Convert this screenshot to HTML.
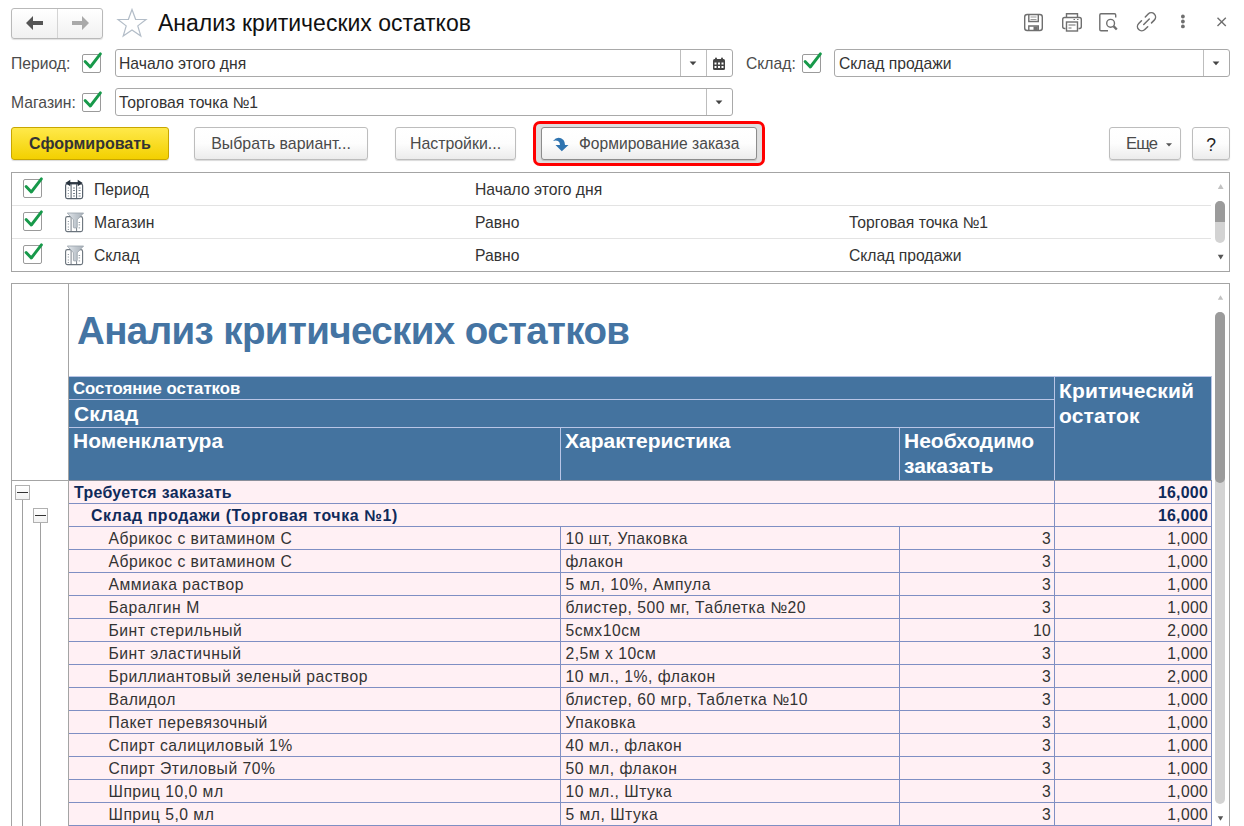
<!DOCTYPE html>
<html><head><meta charset="utf-8">
<style>
*{box-sizing:border-box;margin:0;padding:0}
html,body{width:1244px;height:826px;overflow:hidden;background:#fff;font-family:"Liberation Sans",sans-serif;position:relative}
.a{position:absolute}
.t{position:absolute;white-space:nowrap;line-height:1}
.nav{left:11px;top:8px;width:92px;height:31px;border:1px solid #b9b9b9;border-radius:3px;background:linear-gradient(#fff,#f1f1f1);box-shadow:0 1px 1px rgba(0,0,0,.12)}
.field{position:absolute;border:1px solid #a9a9a9;border-radius:3px;background:#fff;height:28px}
.cb{position:absolute;width:19px;height:19px;border:1px solid #9a9a9a;border-radius:2px;background:#fff}
.lbl{font-size:15.7px;color:#4b4b4b}
.ftx{font-size:15.7px;color:#333}
.btn{position:absolute;height:33px;border:1px solid #bdbdbd;border-radius:3px;background:linear-gradient(#fff 0%,#fdfdfd 50%,#ececec 100%);box-shadow:0 1px 1px rgba(0,0,0,.15);font-size:15.9px;color:#4a4a4a;text-align:center;line-height:31px;white-space:nowrap}
.vl{position:absolute;width:1px}
.hl{position:absolute;height:1px}
.st{position:absolute;white-space:nowrap;line-height:1;font-size:15.7px;color:#333}
.rt{position:absolute;white-space:nowrap;line-height:1;font-size:15.7px;color:#333}
.hd{position:absolute;white-space:nowrap;font-weight:bold;color:#fff;font-size:21px;line-height:24.5px}
</style></head><body>

<div class="a nav"></div>
<div class="a" style="left:57px;top:9px;width:1px;height:29px;background:#d4d4d4"></div>
<svg class="a" style="left:26px;top:16px" width="18" height="14" viewBox="0 0 18 14"><path d="M0 7 L7 0 L7 5 L17 5 L17 9 L7 9 L7 14 Z" fill="#555"/></svg>
<svg class="a" style="left:71px;top:16px" width="18" height="14" viewBox="0 0 18 14"><path d="M18 7 L11 0 L11 5 L1 5 L1 9 L11 9 L11 14 Z" fill="#a9a9a9"/></svg>
<svg class="a" style="left:116px;top:8px" width="32" height="30" viewBox="0 0 32 30"><path d="M16 1.5 L19.6 11.3 L30 11.5 L21.8 17.9 L24.8 28 L16 22 L7.2 28 L10.2 17.9 L2 11.5 L12.4 11.3 Z" fill="none" stroke="#b3bdc8" stroke-width="1.2"/></svg>
<div class="t" style="left:158px;top:12px;font-size:23px;color:#111">Анализ критических остатков</div>
<svg class="a" style="left:1020px;top:10px" width="220" height="26" viewBox="1020 10 220 26">
<g fill="none" stroke="#6f6f6f" stroke-width="1.4">
<rect x="1024.7" y="14.5" width="17.6" height="16" rx="2.5"/>
<path d="M1028.8 14.5 V21.5 H1038.3 V14.5"/>
<path d="M1030.5 17 H1036.5 M1030.5 19.5 H1036.5" stroke="#999" stroke-width="1"/>
<path d="M1028.8 30.5 V26 H1038.3 V30.5"/>
</g>
<rect x="1033.5" y="26.5" width="4.3" height="4" fill="#6f6f6f"/>
<g fill="none" stroke="#6f6f6f" stroke-width="1.4">
<path d="M1066.5 17.5 V13.8 H1077.5 V17.5"/>
<path d="M1065.5 28.5 H1064.5 Q1062.7 28.5 1062.7 26.5 V19.5 Q1062.7 17.5 1064.5 17.5 H1079.5 Q1081.3 17.5 1081.3 19.5 V26.5 Q1081.3 28.5 1079.5 28.5 H1078.5"/>
<rect x="1066.5" y="22" width="11" height="9"/>
<path d="M1068.5 25 H1075.5 M1068.5 28 H1071.5" stroke-width="1"/>
<path d="M1073.5 19.5 H1075 M1077 19.5 H1078.5" stroke-width="1"/>
</g>
<g fill="none" stroke="#6f6f6f" stroke-width="1.4">
<path d="M1108 30.8 H1101 Q1099.8 30.8 1099.8 29.5 V15 Q1099.8 13.8 1101 13.8 H1114.5 Q1115.7 13.8 1115.7 15 V17.5"/>
<circle cx="1110.6" cy="23.3" r="3.9"/>
<path d="M1113.5 26.2 L1116.8 29.5" stroke-width="2.4"/>
</g>
<g fill="none" stroke="#6f6f6f" stroke-width="1.5" stroke-linecap="round" transform="translate(1146.5 21.8) rotate(-45)"><path d="M-2.8 -4.3 H-6.7 A4.3 4.3 0 0 0 -6.7 4.3 H-2.6"/><path d="M2.8 4.3 H6.7 A4.3 4.3 0 0 0 6.7 -4.3 H2.6"/><path d="M-3.9 0 H3.9"/></g>
<circle cx="1182.9" cy="16.5" r="1.9" fill="#6f6f6f"/>
<circle cx="1182.9" cy="21.5" r="1.9" fill="#6f6f6f"/>
<circle cx="1182.9" cy="26.4" r="1.9" fill="#6f6f6f"/>
<path d="M1217.5 17.8 L1225.8 26 M1225.8 17.8 L1217.5 26" stroke="#6f6f6f" stroke-width="1.4"/>
</svg>
<div class="t lbl" style="left:11px;top:56px">Период:</div>
<div class="cb" style="left:82px;top:54px"></div><svg class="a" style="left:81px;top:51px" width="24" height="24" viewBox="0 0 24 24"><path d="M4.1 10.5 L9.3 16 L19.4 2.8" fill="none" stroke="#17994a" stroke-width="2.9" stroke-linecap="round" stroke-linejoin="round"/></svg>
<div class="field" style="left:115px;top:49px;width:618px"></div>
<div class="a" style="left:680px;top:50px;width:1px;height:26px;background:#bdbdbd"></div>
<div class="a" style="left:706px;top:50px;width:1px;height:26px;background:#bdbdbd"></div>
<svg class="a" style="left:689px;top:61px" width="8" height="5" viewBox="0 0 8 5"><path d="M0.6 0.4 H7.4 L4 4.2 Z" fill="#444"/></svg>
<svg class="a" style="left:712px;top:57px" width="14" height="14" viewBox="0 0 14 14"><g fill="#444"><rect x="1" y="2" width="12" height="11" rx="1.5"/></g><g fill="#fff"><rect x="2.5" y="5.5" width="2" height="2"/><rect x="6" y="5.5" width="2" height="2"/><rect x="9.5" y="5.5" width="2" height="2"/><rect x="2.5" y="9" width="2" height="2"/><rect x="6" y="9" width="2" height="2"/><rect x="9.5" y="9" width="2" height="2"/></g><g fill="#444"><rect x="3" y="0.5" width="2" height="3" rx="1"/><rect x="9" y="0.5" width="2" height="3" rx="1"/></g></svg>
<div class="t ftx" style="left:119px;top:56px">Начало этого дня</div>
<div class="t lbl" style="left:746px;top:56px">Склад:</div>
<div class="cb" style="left:802px;top:54px"></div><svg class="a" style="left:801px;top:51px" width="24" height="24" viewBox="0 0 24 24"><path d="M4.1 10.5 L9.3 16 L19.4 2.8" fill="none" stroke="#17994a" stroke-width="2.9" stroke-linecap="round" stroke-linejoin="round"/></svg>
<div class="field" style="left:834px;top:49px;width:396px"></div>
<div class="a" style="left:1203px;top:50px;width:1px;height:26px;background:#bdbdbd"></div>
<svg class="a" style="left:1212px;top:61px" width="8" height="5" viewBox="0 0 8 5"><path d="M0.6 0.4 H7.4 L4 4.2 Z" fill="#444"/></svg>
<div class="t ftx" style="left:839px;top:56px">Склад продажи</div>
<div class="t lbl" style="left:11px;top:95px">Магазин:</div>
<div class="cb" style="left:82px;top:93px"></div><svg class="a" style="left:81px;top:90px" width="24" height="24" viewBox="0 0 24 24"><path d="M4.1 10.5 L9.3 16 L19.4 2.8" fill="none" stroke="#17994a" stroke-width="2.9" stroke-linecap="round" stroke-linejoin="round"/></svg>
<div class="field" style="left:115px;top:88px;width:618px"></div>
<div class="a" style="left:706px;top:89px;width:1px;height:26px;background:#bdbdbd"></div>
<svg class="a" style="left:715px;top:100px" width="8" height="5" viewBox="0 0 8 5"><path d="M0.6 0.4 H7.4 L4 4.2 Z" fill="#444"/></svg>
<div class="t ftx" style="left:119px;top:95px">Торговая точка №1</div>
<div class="btn" style="left:11px;top:127px;width:158px;border-color:#c8a600;background:linear-gradient(#ffe94a,#f3d000);font-weight:bold;color:#333;font-size:16px">Сформировать</div>
<div class="btn" style="left:194px;top:127px;width:174px">Выбрать вариант...</div>
<div class="btn" style="left:395px;top:127px;width:121px">Настройки...</div>
<div class="a" style="left:533px;top:121px;width:232px;height:45px;border:3px solid #ff0000;border-radius:7px;background:#dfdfdf"></div>
<div class="btn" style="left:541px;top:127px;width:216px;text-align:left;padding-left:37px;border-color:#8c8c8c;font-size:15.6px">Формирование заказа</div>
<svg class="a" style="left:552px;top:136px" width="18" height="16" viewBox="0 0 18 16"><path d="M1 5 Q6 -1 11.5 4 Q13 6 13 9 L16.5 9 L9.8 15.2 L3.5 9 L8 9 Q8 6 6 5 Q4 4 1 5 Z" fill="#2f74b0"/></svg>
<div class="btn" style="left:1109px;top:127px;width:72px;text-align:left;padding-left:16px;font-size:16.6px;letter-spacing:-0.9px">Еще</div>
<svg class="a" style="left:1166px;top:143px" width="6" height="4" viewBox="0 0 6 4"><path d="M0 0.3 H6 L3 3.5 Z" fill="#555"/></svg>
<div class="btn" style="left:1192px;top:127px;width:38px;color:#222;font-size:17.5px;line-height:34.5px">?</div>
<div class="a" style="left:11px;top:172px;width:1219px;height:100px;border:1px solid #a4a4a4"></div>
<div class="hl" style="left:12px;top:205px;width:1199px;background:#e3e3e3"></div>
<div class="hl" style="left:12px;top:238px;width:1199px;background:#e3e3e3"></div>
<div class="cb" style="left:23px;top:179px"></div><svg class="a" style="left:22px;top:176px" width="24" height="24" viewBox="0 0 24 24"><path d="M4.1 10.5 L9.3 16 L19.4 2.8" fill="none" stroke="#17994a" stroke-width="2.9" stroke-linecap="round" stroke-linejoin="round"/></svg>
<div class="st" style="left:94px;top:182px">Период</div>
<div class="st" style="left:475px;top:182px">Начало этого дня</div>
<svg class="a" style="left:64px;top:178px" width="20" height="22" viewBox="0 0 20 22"><rect x="1.6" y="5.8" width="17" height="14.8" rx="1.8" fill="#fff" stroke="#56606b" stroke-width="1.2"/><path d="M7.1 6 V20.4 M12.6 6 V20.4" stroke="#56606b" stroke-width="1"/><g fill="#7d8791"><rect x="3.8" y="9.5" width="1" height="1"/><rect x="3.8" y="12" width="1" height="1"/><rect x="3.8" y="15" width="1" height="1"/><rect x="3.8" y="17.5" width="1" height="1"/><rect x="9" y="9.5" width="2" height="1"/><rect x="9" y="12" width="2" height="1"/><rect x="9" y="15" width="2" height="1"/><rect x="9" y="17.5" width="2" height="1"/><rect x="14.6" y="9.5" width="2" height="1"/><rect x="14.6" y="12" width="2" height="1"/><rect x="14.6" y="15" width="2" height="1"/><rect x="14.6" y="17.5" width="2" height="1"/></g><path d="M5 5 H15" stroke="#27323d" stroke-width="1.8"/><path d="M1.3 5 L6.3 1.8 L6.3 8.2 Z M18.7 5 L13.7 1.8 L13.7 8.2 Z" fill="#27323d"/></svg>
<div class="cb" style="left:23px;top:212px"></div><svg class="a" style="left:22px;top:209px" width="24" height="24" viewBox="0 0 24 24"><path d="M4.1 10.5 L9.3 16 L19.4 2.8" fill="none" stroke="#17994a" stroke-width="2.9" stroke-linecap="round" stroke-linejoin="round"/></svg>
<div class="st" style="left:94px;top:215px">Магазин</div>
<div class="st" style="left:475px;top:215px">Равно</div>
<div class="st" style="left:849px;top:215px">Торговая точка №1</div>
<svg class="a" style="left:64px;top:211px" width="20" height="22" viewBox="0 0 20 22"><rect x="1.6" y="5.6" width="17" height="15" rx="1.8" fill="#fff" stroke="#6a737c" stroke-width="1.1"/><path d="M7.1 6 V20.4 M12.6 8 V20.4" stroke="#6a737c" stroke-width="0.9"/><g fill="#7d8791"><rect x="3.8" y="10" width="1" height="1"/><rect x="3.8" y="12.5" width="1" height="1"/><rect x="3.8" y="15.5" width="1" height="1"/><rect x="3.8" y="18" width="1" height="1"/><rect x="14.6" y="11" width="1.5" height="0.8"/><rect x="14.6" y="13.5" width="1.5" height="0.8"/><rect x="14.6" y="16.5" width="1.5" height="0.8"/></g><defs><linearGradient id="fg1" x1="0" y1="0" x2="1" y2="0"><stop offset="0" stop-color="#e4e8ec"/><stop offset="0.5" stop-color="#c2c9d0"/><stop offset="1" stop-color="#aab2ba"/></linearGradient></defs><path d="M3.3 2 H19.6 L13.2 8.8 V16.2 Q13.2 16.9 12.5 16.9 H10.1 Q9.4 16.9 9.4 16.2 V8.8 Z" fill="url(#fg1)" stroke="#98a1aa" stroke-width="0.8"/></svg>
<div class="cb" style="left:23px;top:245px"></div><svg class="a" style="left:22px;top:242px" width="24" height="24" viewBox="0 0 24 24"><path d="M4.1 10.5 L9.3 16 L19.4 2.8" fill="none" stroke="#17994a" stroke-width="2.9" stroke-linecap="round" stroke-linejoin="round"/></svg>
<div class="st" style="left:94px;top:248px">Склад</div>
<div class="st" style="left:475px;top:248px">Равно</div>
<div class="st" style="left:849px;top:248px">Склад продажи</div>
<svg class="a" style="left:64px;top:244px" width="20" height="22" viewBox="0 0 20 22"><rect x="1.6" y="5.6" width="17" height="15" rx="1.8" fill="#fff" stroke="#6a737c" stroke-width="1.1"/><path d="M7.1 6 V20.4 M12.6 8 V20.4" stroke="#6a737c" stroke-width="0.9"/><g fill="#7d8791"><rect x="3.8" y="10" width="1" height="1"/><rect x="3.8" y="12.5" width="1" height="1"/><rect x="3.8" y="15.5" width="1" height="1"/><rect x="3.8" y="18" width="1" height="1"/><rect x="14.6" y="11" width="1.5" height="0.8"/><rect x="14.6" y="13.5" width="1.5" height="0.8"/><rect x="14.6" y="16.5" width="1.5" height="0.8"/></g><defs><linearGradient id="fg2" x1="0" y1="0" x2="1" y2="0"><stop offset="0" stop-color="#e4e8ec"/><stop offset="0.5" stop-color="#c2c9d0"/><stop offset="1" stop-color="#aab2ba"/></linearGradient></defs><path d="M3.3 2 H19.6 L13.2 8.8 V16.2 Q13.2 16.9 12.5 16.9 H10.1 Q9.4 16.9 9.4 16.2 V8.8 Z" fill="url(#fg2)" stroke="#98a1aa" stroke-width="0.8"/></svg>
<svg class="a" style="left:1212px;top:180px" width="16" height="84" viewBox="0 0 16 84"><path d="M5.8 9 L8.7 4 L11.6 9 Z" fill="#c2c2c2"/><rect x="3" y="21" width="10" height="42" rx="5" fill="#d3d3d3"/><rect x="3" y="21" width="10" height="21" rx="5" fill="#9b9b9b"/><rect x="3" y="36" width="10" height="6" fill="#9b9b9b"/><path d="M5.8 74.8 L8.7 79.6 L11.6 74.8 Z" fill="#555"/></svg>
<div class="a" style="left:11px;top:283px;width:1219px;height:560px;border:1px solid #a4a4a4"></div>
<div class="vl" style="left:68px;top:284px;height:542px;background:#a4a4a4"></div>
<div class="hl" style="left:12px;top:480px;width:57px;background:#a4a4a4"></div>
<svg class="a" style="left:1212px;top:290px" width="16" height="536" viewBox="0 0 16 536"><path d="M5.8 9.8 L8.5 5.2 L11.2 9.8 Z" fill="#c2c2c2"/><rect x="3" y="22" width="10" height="492" rx="5" fill="#d3d3d3"/><rect x="3" y="22" width="10" height="171" rx="5" fill="#9b9b9b"/><path d="M5.8 526.2 L8.5 530.8 L11.2 526.2 Z" fill="#555"/></svg>
<div class="t" style="left:77px;top:312px;font-size:38.5px;letter-spacing:-0.6px;font-weight:bold;color:#4474a3">Анализ критических остатков</div>
<div class="a" style="left:69px;top:377px;width:1142px;height:103px;background:#44739f"></div>
<div class="hl" style="left:69px;top:376px;width:1143px;background:#b9c5e6"></div>
<div class="hl" style="left:69px;top:399px;width:985px;background:#b9c5e6"></div>
<div class="hl" style="left:69px;top:427px;width:985px;background:#b9c5e6"></div>
<div class="vl" style="left:560px;top:428px;height:52px;background:#b9c5e6"></div>
<div class="vl" style="left:899px;top:428px;height:52px;background:#b9c5e6"></div>
<div class="vl" style="left:1054px;top:377px;height:103px;background:#b9c5e6"></div>
<div class="vl" style="left:1211px;top:377px;height:103px;background:#b9c5e6"></div>
<div class="hl" style="left:69px;top:480px;width:1143px;background:#8a8f9a"></div>
<div class="t" style="left:73px;top:381px;font-size:16.75px;font-weight:bold;color:#fff">Состояние остатков</div>
<div class="t" style="left:74px;top:403px;font-size:21px;font-weight:bold;color:#fff">Склад</div>
<div class="hd" style="left:73px;top:429px">Номенклатура</div>
<div class="hd" style="left:565px;top:429px">Характеристика</div>
<div class="hd" style="left:904px;top:429px">Необходимо<br>заказать</div>
<div class="hd" style="left:1059px;top:379px;letter-spacing:0.15px">Критический<br>остаток</div>
<div class="a" style="left:69px;top:481px;width:1142px;height:345px;background:#fff0f4"></div>
<div class="hl" style="left:69px;top:503px;width:1143px;background:#7f8fc3"></div>
<div class="hl" style="left:69px;top:526px;width:1143px;background:#7f8fc3"></div>
<div class="hl" style="left:69px;top:549px;width:1143px;background:#7f8fc3"></div>
<div class="hl" style="left:69px;top:572px;width:1143px;background:#7f8fc3"></div>
<div class="hl" style="left:69px;top:595px;width:1143px;background:#7f8fc3"></div>
<div class="hl" style="left:69px;top:618px;width:1143px;background:#7f8fc3"></div>
<div class="hl" style="left:69px;top:641px;width:1143px;background:#7f8fc3"></div>
<div class="hl" style="left:69px;top:664px;width:1143px;background:#7f8fc3"></div>
<div class="hl" style="left:69px;top:687px;width:1143px;background:#7f8fc3"></div>
<div class="hl" style="left:69px;top:710px;width:1143px;background:#7f8fc3"></div>
<div class="hl" style="left:69px;top:733px;width:1143px;background:#7f8fc3"></div>
<div class="hl" style="left:69px;top:756px;width:1143px;background:#7f8fc3"></div>
<div class="hl" style="left:69px;top:779px;width:1143px;background:#7f8fc3"></div>
<div class="hl" style="left:69px;top:802px;width:1143px;background:#7f8fc3"></div>
<div class="hl" style="left:69px;top:825px;width:1143px;background:#7f8fc3"></div>
<div class="vl" style="left:1054px;top:481px;height:345px;background:#7f8fc3"></div>
<div class="vl" style="left:1211px;top:481px;height:345px;background:#7f8fc3"></div>
<div class="vl" style="left:560px;top:527px;height:299px;background:#7f8fc3"></div>
<div class="vl" style="left:899px;top:527px;height:299px;background:#7f8fc3"></div>
<div class="rt" style="left:74px;top:485px;font-weight:bold;color:#0f2a5a;font-size:15.9px;letter-spacing:0.33px">Требуется заказать</div>
<div class="rt" style="right:36px;top:485px;font-weight:bold;color:#0f2a5a;font-size:15.9px;letter-spacing:0.25px">16,000</div>
<div class="rt" style="left:91px;top:508px;font-weight:bold;color:#0f2a5a;font-size:15.9px;letter-spacing:0.6px">Склад продажи (Торговая точка №1)</div>
<div class="rt" style="right:36px;top:508px;font-weight:bold;color:#0f2a5a;font-size:15.9px;letter-spacing:0.25px">16,000</div>
<div class="rt" style="left:108.5px;top:531px;letter-spacing:0.5px">Абрикос с витамином С</div>
<div class="rt" style="left:565.5px;top:531px;letter-spacing:0.5px">10 шт, Упаковка</div>
<div class="rt" style="right:193px;top:531px;letter-spacing:0.3px">3</div>
<div class="rt" style="right:36px;top:531px;letter-spacing:0.3px">1,000</div>
<div class="rt" style="left:108.5px;top:554px;letter-spacing:0.5px">Абрикос с витамином С</div>
<div class="rt" style="left:565.5px;top:554px;letter-spacing:0.5px">флакон</div>
<div class="rt" style="right:193px;top:554px;letter-spacing:0.3px">3</div>
<div class="rt" style="right:36px;top:554px;letter-spacing:0.3px">1,000</div>
<div class="rt" style="left:108.5px;top:577px;letter-spacing:0.5px">Аммиака раствор</div>
<div class="rt" style="left:565.5px;top:577px;letter-spacing:0.5px">5 мл, 10%, Ампула</div>
<div class="rt" style="right:193px;top:577px;letter-spacing:0.3px">3</div>
<div class="rt" style="right:36px;top:577px;letter-spacing:0.3px">1,000</div>
<div class="rt" style="left:108.5px;top:600px;letter-spacing:0.5px">Баралгин М</div>
<div class="rt" style="left:565.5px;top:600px;letter-spacing:0.5px">блистер, 500 мг, Таблетка №20</div>
<div class="rt" style="right:193px;top:600px;letter-spacing:0.3px">3</div>
<div class="rt" style="right:36px;top:600px;letter-spacing:0.3px">1,000</div>
<div class="rt" style="left:108.5px;top:623px;letter-spacing:0.5px">Бинт стерильный</div>
<div class="rt" style="left:565.5px;top:623px;letter-spacing:0.5px">5смх10см</div>
<div class="rt" style="right:193px;top:623px;letter-spacing:0.3px">10</div>
<div class="rt" style="right:36px;top:623px;letter-spacing:0.3px">2,000</div>
<div class="rt" style="left:108.5px;top:646px;letter-spacing:0.5px">Бинт эластичный</div>
<div class="rt" style="left:565.5px;top:646px;letter-spacing:0.5px">2,5м х 10см</div>
<div class="rt" style="right:193px;top:646px;letter-spacing:0.3px">3</div>
<div class="rt" style="right:36px;top:646px;letter-spacing:0.3px">1,000</div>
<div class="rt" style="left:108.5px;top:669px;letter-spacing:0.5px">Бриллиантовый зеленый раствор</div>
<div class="rt" style="left:565.5px;top:669px;letter-spacing:0.5px">10 мл., 1%, флакон</div>
<div class="rt" style="right:193px;top:669px;letter-spacing:0.3px">3</div>
<div class="rt" style="right:36px;top:669px;letter-spacing:0.3px">2,000</div>
<div class="rt" style="left:108.5px;top:692px;letter-spacing:0.5px">Валидол</div>
<div class="rt" style="left:565.5px;top:692px;letter-spacing:0.5px">блистер, 60 мгр, Таблетка №10</div>
<div class="rt" style="right:193px;top:692px;letter-spacing:0.3px">3</div>
<div class="rt" style="right:36px;top:692px;letter-spacing:0.3px">1,000</div>
<div class="rt" style="left:108.5px;top:715px;letter-spacing:0.5px">Пакет перевязочный</div>
<div class="rt" style="left:565.5px;top:715px;letter-spacing:0.5px">Упаковка</div>
<div class="rt" style="right:193px;top:715px;letter-spacing:0.3px">3</div>
<div class="rt" style="right:36px;top:715px;letter-spacing:0.3px">1,000</div>
<div class="rt" style="left:108.5px;top:738px;letter-spacing:0.5px">Спирт салициловый 1%</div>
<div class="rt" style="left:565.5px;top:738px;letter-spacing:0.5px">40 мл., флакон</div>
<div class="rt" style="right:193px;top:738px;letter-spacing:0.3px">3</div>
<div class="rt" style="right:36px;top:738px;letter-spacing:0.3px">1,000</div>
<div class="rt" style="left:108.5px;top:761px;letter-spacing:0.5px">Спирт Этиловый 70%</div>
<div class="rt" style="left:565.5px;top:761px;letter-spacing:0.5px">50 мл, флакон</div>
<div class="rt" style="right:193px;top:761px;letter-spacing:0.3px">3</div>
<div class="rt" style="right:36px;top:761px;letter-spacing:0.3px">1,000</div>
<div class="rt" style="left:108.5px;top:784px;letter-spacing:0.5px">Шприц 10,0 мл</div>
<div class="rt" style="left:565.5px;top:784px;letter-spacing:0.5px">10 мл., Штука</div>
<div class="rt" style="right:193px;top:784px;letter-spacing:0.3px">3</div>
<div class="rt" style="right:36px;top:784px;letter-spacing:0.3px">1,000</div>
<div class="rt" style="left:108.5px;top:807px;letter-spacing:0.5px">Шприц 5,0 мл</div>
<div class="rt" style="left:565.5px;top:807px;letter-spacing:0.5px">5 мл, Штука</div>
<div class="rt" style="right:193px;top:807px;letter-spacing:0.3px">3</div>
<div class="rt" style="right:36px;top:807px;letter-spacing:0.3px">1,000</div>
<div class="vl" style="left:22px;top:500px;height:326px;background:#a0a0a0"></div>
<div class="vl" style="left:40px;top:523px;height:303px;background:#a0a0a0"></div>
<div class="a" style="left:15px;top:485px;width:15px;height:15px;border:1px solid #b0b0b0;background:linear-gradient(#fff,#f2f2f2)"></div>
<div class="a" style="left:17px;top:492px;width:11px;height:1px;background:#333"></div>
<div class="a" style="left:33px;top:508px;width:15px;height:15px;border:1px solid #b0b0b0;background:linear-gradient(#fff,#f2f2f2)"></div>
<div class="a" style="left:35px;top:515px;width:11px;height:1px;background:#333"></div>
</body></html>
